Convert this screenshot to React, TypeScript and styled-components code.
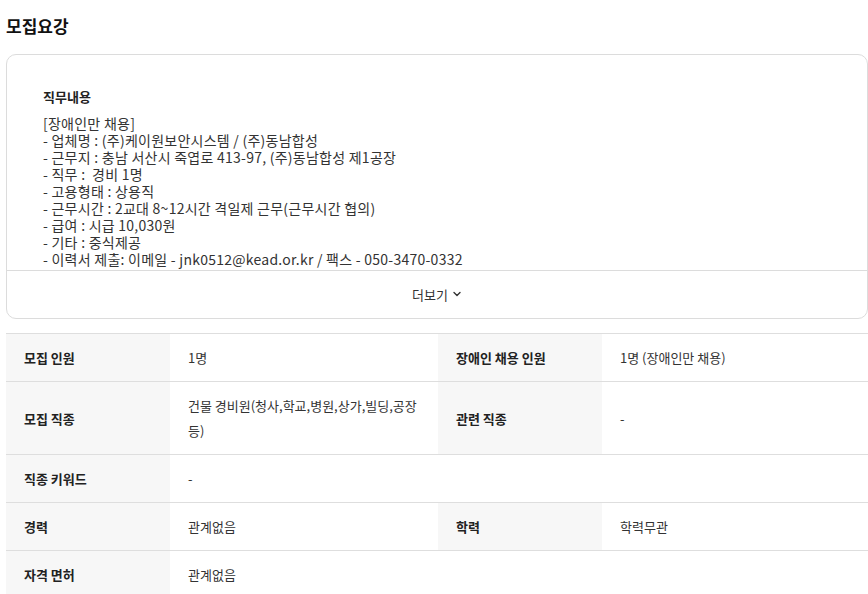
import React from 'react';
import styled, { createGlobalStyle } from 'styled-components';

const GlobalStyle = createGlobalStyle`
  body {
    margin: 0;
    background: #fff;
    font-family: "Noto Sans CJK KR", "Noto Sans", sans-serif;
    color: #222;
  }
`;

const duties = [
  '[장애인만 채용]',
  '- 업체명 : (주)케이원보안시스템 / (주)동남합성',
  '- 근무지 : 충남 서산시 죽엽로 413-97, (주)동남합성 제1공장',
  '- 직무 :  경비 1명',
  '- 고용형태 : 상용직',
  '- 근무시간 : 2교대 8~12시간 격일제 근무(근무시간 협의)',
  '- 급여 : 시급 10,030원',
  '- 기타 : 중식제공',
  '- 이력서 제출: 이메일 - jnk0512@kead.or.kr / 팩스 - 050-3470-0332',
];

type Cell = { label: string; value: React.ReactNode };

const rows: Cell[][] = [
  [
    { label: '모집 인원', value: '1명' },
    { label: '장애인 채용 인원', value: '1명 (장애인만 채용)' },
  ],
  [
    { label: '모집 직종', value: '건물 경비원(청사,학교,병원,상가,빌딩,공장 등)' },
    { label: '관련 직종', value: '-' },
  ],
  [{ label: '직종 키워드', value: '-' }],
  [
    { label: '경력', value: '관계없음' },
    { label: '학력', value: '학력무관' },
  ],
  [{ label: '자격 면허', value: '관계없음' }],
];

const ChevronDown = () => (
  <svg width="10" height="10" viewBox="0 0 10 10" fill="none">
    <path d="M2 3.5L5 6.5L8 3.5" stroke="#333" strokeWidth="1.4" strokeLinecap="round" strokeLinejoin="round" />
  </svg>
);

const App = () => {
  return (
    <>
      <GlobalStyle />
      <Page>
        <Heading>모집요강</Heading>
        <Card>
          <CardBody>
            <SubTitle>직무내용</SubTitle>
            <Duties>
              {duties.map((line) => (
                <DutyLine key={line}>{line}</DutyLine>
              ))}
            </Duties>
          </CardBody>
          <MoreButton>
            더보기 <ChevronDown />
          </MoreButton>
        </Card>
        <InfoTable>
          {rows.map((row, i) => (
            <Row key={i}>
              {row.map((cell) => (
                <React.Fragment key={cell.label}>
                  <Label>{cell.label}</Label>
                  <Value $wide={row.length === 1}>{cell.value}</Value>
                </React.Fragment>
              ))}
            </Row>
          ))}
        </InfoTable>
      </Page>
    </>
  );
};

const Page = styled.div`
  padding: 12px 0 0 6px;
  display: flex;
  flex-direction: column;
`;

const Heading = styled.h2`
  margin: 0;
  font-size: 17px;
  font-weight: 700;
  line-height: 28px;
  color: #111;
`;

const Card = styled.div`
  margin-top: 14px;
  width: 862px;
  box-sizing: border-box;
  border: 1px solid #dcdcdc;
  border-radius: 10px;
  display: flex;
  flex-direction: column;
`;

const CardBody = styled.div`
  box-sizing: border-box;
  padding: 32px 36px 0;
  height: 216px;
  overflow: hidden;
  border-bottom: 1px solid #dcdcdc;
`;

const SubTitle = styled.div`
  font-size: 13px;
  font-weight: 700;
  line-height: 20px;
  color: #222;
`;

const Duties = styled.div`
  margin-top: 8px;
  display: flex;
  flex-direction: column;
`;

const DutyLine = styled.div`
  font-size: 14px;
  line-height: 17px;
  letter-spacing: 0.25px;
  color: #333;
  white-space: pre;
`;

const MoreButton = styled.button`
  height: 47px;
  border: none;
  background: none;
  font-family: inherit;
  font-size: 13px;
  color: #333;
  display: flex;
  align-items: center;
  justify-content: center;
  gap: 4px;
  cursor: pointer;
  padding: 0 0 1px;
`;

const InfoTable = styled.div`
  margin-top: 14px;
  width: 862px;
  border-top: 1px solid #dedede;
`;

const Row = styled.div`
  display: grid;
  grid-template-columns: 164px 268px 164px 1fr;
  border-bottom: 1px solid #dedede;
`;

const Label = styled.div`
  background: #f7f7f7;
  padding: 11px 18px;
  display: flex;
  align-items: center;
  font-size: 13px;
  font-weight: 700;
  line-height: 25px;
  color: #222;
`;

const Value = styled.div<{ $wide?: boolean }>`
  grid-column: ${(props) => (props.$wide ? 'span 3' : 'auto')};
  padding: 11px 18px;
  display: flex;
  align-items: center;
  font-size: 13px;
  line-height: 25px;
  color: #333;
`;

export default App;
